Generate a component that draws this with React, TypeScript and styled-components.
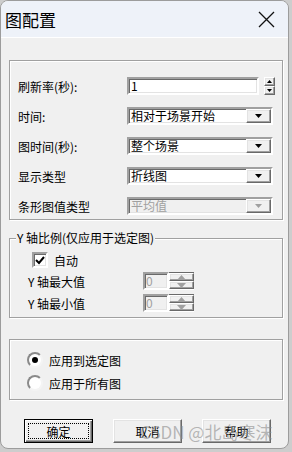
import React from 'react';
import styled, { createGlobalStyle, css } from 'styled-components';

const GlobalStyle = createGlobalStyle`
  html, body {
    margin: 0;
    padding: 0;
    background: #cdcdcd;
  }
  body {
    font-family: "Noto Sans CJK SC", "Liberation Sans", sans-serif;
    font-size: 12px;
    color: #000;
  }
`;

// classic 3d borders
const sunken = css`
  border-style: solid;
  border-width: 2px;
  border-color: #a0a0a0 #fff #fff #a0a0a0;
  box-shadow: inset 1px 1px 0 #696969, inset -1px -1px 0 #e3e3e3;
`;

const raised = css`
  border-style: solid;
  border-width: 1px;
  border-color: #fff #696969 #696969 #fff;
  box-shadow: inset -1px -1px 0 #a0a0a0, inset 1px 1px 0 #e3e3e3;
`;

const etched = css`
  border: 1px solid #a0a0a0;
  box-shadow: inset 1px 1px 0 #fff, 1px 1px 0 #fff;
`;

const Window = styled.div`
  position: relative;
  box-sizing: border-box;
  width: 289px;
  height: 449px;
  border: 1px solid #9c9c9c;
  border-radius: 8px;
  background: #f0f0f0;
  overflow: hidden;
  display: flex;
  flex-direction: column;
`;

const TitleBar = styled.div`
  height: 36px;
  flex: none;
  display: flex;
  align-items: center;
  justify-content: space-between;
  padding: 0 13px 0 4px;
  background: #eef2f9;
  border-bottom: 1px solid #fff;
`;

const Title = styled.div`
  font-size: 17px;
  line-height: 20px;
  margin-top: 1px;
`;

const Body = styled.div`
  display: flex;
  flex-direction: column;
  padding: 22px 0 0 8px;
`;

const Group = styled.div<{ $h: number; $top?: number }>`
  position: relative;
  box-sizing: border-box;
  width: 274px;
  height: ${(p) => p.$h}px;
  margin-top: ${(p) => p.$top || 0}px;
  ${etched};
  display: flex;
  flex-direction: column;
`;

const Legend = styled.div`
  position: absolute;
  top: -8px;
  left: 6px;
  padding: 0 1px;
  line-height: 14px;
  background: #f0f0f0;
`;

const FormRows = styled.div`
  display: flex;
  flex-direction: column;
  gap: 12px;
  padding: 16px 0 0 8px;
`;

const Row = styled.div<{ $indent?: number; $h?: number }>`
  display: flex;
  align-items: center;
  height: ${(p) => p.$h || 18}px;
  padding-left: ${(p) => p.$indent || 0}px;
`;

const Label = styled.div<{ $w: number }>`
  width: ${(p) => p.$w}px;
  flex: none;
  white-space: nowrap;
`;

const TextBox = styled.div<{ $w: number }>`
  box-sizing: border-box;
  width: ${(p) => p.$w}px;
  height: 18px;
  ${sunken};
  background: #fff;
  padding-left: 2px;
  line-height: 13px;
`;

const SpinPair = styled.div`
  display: flex;
  flex-direction: column;
  margin-left: 5px;
`;

const SpinBtn = styled.div<{ $w: number; $h: number }>`
  box-sizing: border-box;
  width: ${(p) => p.$w}px;
  height: ${(p) => p.$h}px;
  ${raised};
  background: #f0f0f0;
  display: flex;
  align-items: center;
  justify-content: center;
`;

const Combo = styled.div<{ $disabled?: boolean }>`
  box-sizing: border-box;
  width: 146px;
  height: 18px;
  ${sunken};
  background: ${(p) => (p.$disabled ? '#f0f0f0' : '#fff')};
  color: ${(p) => (p.$disabled ? '#a0a0a0' : '#000')};
  display: flex;
  align-items: center;
  justify-content: space-between;
  padding-left: 2px;
`;

const ComboText = styled.span`
  line-height: 14px;
`;

const ComboBtn = styled.div`
  box-sizing: border-box;
  width: 25px;
  height: 14px;
  ${raised};
  background: #f0f0f0;
  display: flex;
  align-items: center;
  justify-content: center;
`;

const CheckRows = styled.div`
  display: flex;
  flex-direction: column;
  gap: 4px;
  padding-top: 13px;
`;

const CheckBox = styled.div`
  box-sizing: border-box;
  width: 16px;
  height: 16px;
  ${sunken};
  background: #fff;
  display: flex;
  align-items: center;
  justify-content: center;
  margin-right: 6px;
`;

const SpinField = styled.div`
  display: flex;
  height: 18px;
  margin-left: 0;
`;

const SpinInput = styled.div`
  box-sizing: border-box;
  width: 26px;
  height: 18px;
  ${sunken};
  background: #f0f0f0;
  color: #a0a0a0;
  padding-left: 1px;
  line-height: 13px;
`;

const SpinStack = styled.div`
  display: flex;
  flex-direction: column;
  border-top: 1px solid #696969;
  border-bottom: 1px solid #fff;
`;

const RadioRows = styled.div`
  display: flex;
  flex-direction: column;
  gap: 7px;
  padding: 12px 0 0 17px;
`;

const Radio = styled.div<{ $on?: boolean }>`
  box-sizing: border-box;
  width: 16px;
  height: 16px;
  border-radius: 50%;
  border: 2px solid;
  border-color: #8a8a8a #f4f4f4 #f4f4f4 #8a8a8a;
  background: #fff;
  display: flex;
  align-items: center;
  justify-content: center;
  margin-right: 6px;
  &::after {
    content: '';
    width: 6px;
    height: 6px;
    border-radius: 50%;
    background: ${(p) => (p.$on ? '#000' : 'transparent')};
  }
`;

const ButtonBar = styled.div`
  display: flex;
  gap: 20px;
  padding: 19px 0 0 15px;
`;

const Button = styled.div<{ $default?: boolean }>`
  position: relative;
  box-sizing: border-box;
  width: 69px;
  height: 24px;
  background: #f0f0f0;
  display: flex;
  align-items: center;
  justify-content: center;
  ${(p) =>
    p.$default
      ? css`
          border: 1px solid #000;
          box-shadow: inset 1px 1px 0 #fff, inset -1px -1px 0 #696969, inset -2px -2px 0 #a0a0a0;
          &::after {
            content: '';
            position: absolute;
            inset: 3px;
            border: 1px dotted #000;
          }
        `
      : raised};
`;

const Watermark = styled.div`
  position: absolute;
  left: 139px;
  top: 420px;
  font-size: 17px;
  line-height: 22px;
  color: rgba(140, 140, 140, 0.6);
  white-space: nowrap;
  pointer-events: none;
`;

const Tri = ({ up, color = '#000', w = 7 }: { up?: boolean; color?: string; w?: number }) => (
  <svg width={w} height={Math.ceil(w / 2)} viewBox={`0 0 ${w} ${Math.ceil(w / 2)}`}>
    <polygon
      points={up ? `0,${Math.ceil(w / 2)} ${w},${Math.ceil(w / 2)} ${w / 2},0` : `0,0 ${w},0 ${w / 2},${Math.ceil(w / 2)}`}
      fill={color}
    />
  </svg>
);

const combos = [
  { label: '时间:', value: '相对于场景开始' },
  { label: '图时间(秒):', value: '整个场景' },
  { label: '显示类型', value: '折线图' },
  { label: '条形图值类型', value: '平均值', disabled: true },
];

export default function App() {
  return (
    <>
      <GlobalStyle />
      <Window>
        <TitleBar>
          <Title>图配置</Title>
          <svg width="17" height="17" viewBox="0 0 17 17">
            <path d="M1 1 L16 16 M16 1 L1 16" stroke="#111" strokeWidth="1.3" />
          </svg>
        </TitleBar>
        <Body>
          <Group $h={160}>
            <FormRows>
              <Row>
                <Label $w={109}>刷新率(秒):</Label>
                <TextBox $w={132}>1</TextBox>
                <SpinPair>
                  <SpinBtn $w={11} $h={9}>
                    <Tri up w={5} />
                  </SpinBtn>
                  <SpinBtn $w={11} $h={9}>
                    <Tri w={5} />
                  </SpinBtn>
                </SpinPair>
              </Row>
              {combos.map((c) => (
                <Row key={c.label}>
                  <Label $w={109}>{c.label}</Label>
                  <Combo $disabled={c.disabled}>
                    <ComboText>{c.value}</ComboText>
                    <ComboBtn>
                      <Tri color={c.disabled ? '#a0a0a0' : '#000'} />
                    </ComboBtn>
                  </Combo>
                </Row>
              ))}
            </FormRows>
          </Group>

          <Group $h={80} $top={18}>
            <Legend>Y 轴比例(仅应用于选定图)</Legend>
            <CheckRows>
              <Row $indent={22} $h={16}>
                <CheckBox>
                  <svg width="10" height="9" viewBox="0 0 10 9">
                    <path d="M1 4 L4 7 L9 1" stroke="#000" strokeWidth="2" fill="none" />
                  </svg>
                </CheckBox>
                自动
              </Row>
              {['Y 轴最大值', 'Y 轴最小值'].map((l) => (
                <Row key={l} $indent={18}>
                  <Label $w={115}>{l}</Label>
                  <SpinField>
                    <SpinInput>0</SpinInput>
                    <SpinStack>
                      <SpinBtn $w={25} $h={8}>
                        <Tri up color="#a0a0a0" w={9} />
                      </SpinBtn>
                      <SpinBtn $w={25} $h={8}>
                        <Tri color="#a0a0a0" w={9} />
                      </SpinBtn>
                    </SpinStack>
                  </SpinField>
                </Row>
              ))}
            </CheckRows>
          </Group>

          <Group $h={61} $top={21}>
            <RadioRows>
              <Row $h={16}>
                <Radio $on />
                应用到选定图
              </Row>
              <Row $h={16}>
                <Radio />
                应用于所有图
              </Row>
            </RadioRows>
          </Group>

          <ButtonBar>
            <Button $default>确定</Button>
            <Button>取消</Button>
            <Button>帮助</Button>
          </ButtonBar>
        </Body>
        <Watermark>CSDN @北岛寒沫</Watermark>
      </Window>
    </>
  );
}
